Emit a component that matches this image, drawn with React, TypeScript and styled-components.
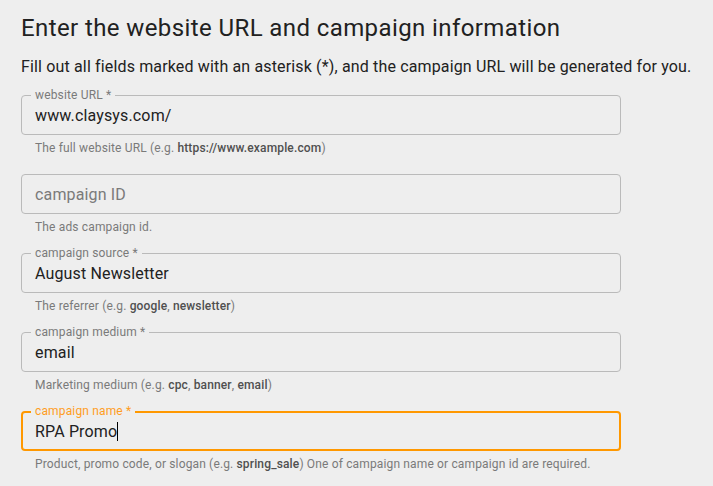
import React from "react";
import styled, { createGlobalStyle, css } from "styled-components";

const GlobalStyle = createGlobalStyle`
  html, body {
    margin: 0;
    padding: 0;
    background: #eeeeee;
  }
  body {
    font-family: Roboto, "Liberation Sans", Arial, sans-serif;
    color: rgba(0, 0, 0, 0.87);
  }
`;

const Page = styled.div`
  padding: 14px 21px 0 21px;
  width: 600px;
`;

const Title = styled.h1`
  margin: 0;
  font-size: 24px;
  line-height: 28px;
  font-weight: 400;
  letter-spacing: 0.4px;
  color: #212121;
  white-space: nowrap;
`;

const Subtitle = styled.p`
  margin: 13px 0 0 0;
  font-size: 16px;
  line-height: 24px;
  letter-spacing: 0.15px;
  color: #212121;
  white-space: nowrap;
`;

const Fields = styled.div`
  display: flex;
  flex-direction: column;
  gap: 16px;
  margin-top: 16px;
`;

const FieldWrap = styled.div`
  display: flex;
  flex-direction: column;
`;

const Box = styled.div<{ $focused?: boolean }>`
  position: relative;
  box-sizing: border-box;
  height: 40px;
  border-radius: 4px;
  border: 1px solid #bababa;
  display: flex;
  align-items: center;
  padding: 0 13px;
  ${(p) =>
    p.$focused &&
    css`
      border: 2px solid #ff9800;
      padding: 0 12px;
    `}
`;

const FloatLabel = styled.span<{ $focused?: boolean }>`
  position: absolute;
  left: ${(p) => (p.$focused ? "8px" : "9px")};
  top: ${(p) => (p.$focused ? "-9px" : "-8px")};
  padding: 0 4px;
  background: #eeeeee;
  font-size: 12px;
  line-height: 14px;
  letter-spacing: 0.15px;
  color: ${(p) => (p.$focused ? "#ff9d1f" : "#7a7a7a")};
  white-space: nowrap;
`;

const Value = styled.span`
  font-size: 16px;
  line-height: 19px;
  letter-spacing: 0.15px;
  color: #212121;
  display: flex;
  align-items: center;
`;

const Placeholder = styled.span`
  font-size: 16px;
  line-height: 19px;
  letter-spacing: 0.15px;
  color: #7a7a7a;
`;

const Caret = styled.span`
  display: inline-block;
  width: 1px;
  height: 19px;
  background: #000;
`;

const Helper = styled.div`
  margin: 3px 14px 0 14px;
  font-size: 12px;
  line-height: 20px;
  letter-spacing: 0.15px;
  color: #7a7a7a;
  white-space: nowrap;
`;

const Strong = styled.b`
  font-weight: 500;
  color: #505050;
`;

type FieldProps = {
  label: string;
  value?: string;
  focused?: boolean;
  helper: React.ReactNode;
};

function Field({ label, value, focused, helper }: FieldProps) {
  return (
    <FieldWrap>
      <Box $focused={focused}>
        {value !== undefined ? (
          <>
            <FloatLabel $focused={focused}>{label}</FloatLabel>
            <Value>
              {value}
              {focused && <Caret />}
            </Value>
          </>
        ) : (
          <Placeholder>{label}</Placeholder>
        )}
      </Box>
      <Helper>{helper}</Helper>
    </FieldWrap>
  );
}

export default function App() {
  return (
    <>
      <GlobalStyle />
      <Page>
        <Title>Enter the website URL and campaign information</Title>
        <Subtitle>
          Fill out all fields marked with an asterisk (*), and the campaign URL
          will be generated for you.
        </Subtitle>
        <Fields>
          <Field
            label="website URL *"
            value="www.claysys.com/"
            helper={
              <>
                The full website URL (e.g. <Strong>https://www.example.com</Strong>)
              </>
            }
          />
          <Field label="campaign ID" helper="The ads campaign id." />
          <Field
            label="campaign source *"
            value="August Newsletter"
            helper={
              <>
                The referrer (e.g. <Strong>google</Strong>, <Strong>newsletter</Strong>)
              </>
            }
          />
          <Field
            label="campaign medium *"
            value="email"
            helper={
              <>
                Marketing medium (e.g. <Strong>cpc</Strong>, <Strong>banner</Strong>,{" "}
                <Strong>email</Strong>)
              </>
            }
          />
          <Field
            label="campaign name *"
            value="RPA Promo"
            focused
            helper={
              <>
                Product, promo code, or slogan (e.g. <Strong>spring_sale</Strong>) One
                of campaign name or campaign id are required.
              </>
            }
          />
        </Fields>
      </Page>
    </>
  );
}
